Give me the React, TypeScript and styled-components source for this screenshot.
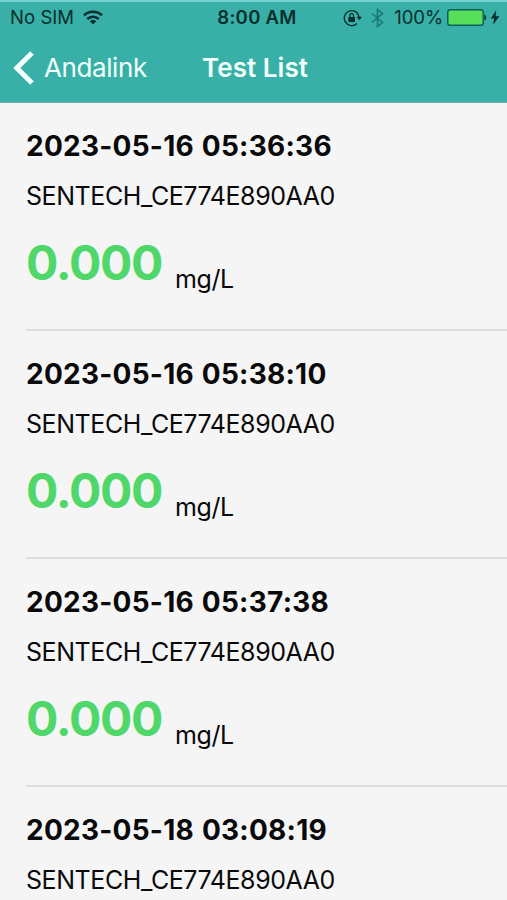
import React from "react";
import styled, { createGlobalStyle } from "styled-components";

const GlobalStyle = createGlobalStyle`
  * { box-sizing: border-box; }
  html, body { margin: 0; background: #f5f5f6; overflow: hidden; }
  body { font-family: Inter, "Liberation Sans", sans-serif; color: #0a0a0a; }
`;

const Screen = styled.main`
  width: 507px;
  height: 900px;
  overflow: hidden;
  background: #f5f5f6;
`;

const Header = styled.header`
  height: 103px;
  background: #38b0a7;
  border-top: 2px solid #74d3cd;
  border-bottom: 1px solid #6faca8;
`;

const StatusBar = styled.div`
  display: grid;
  grid-template-columns: 1fr auto 1fr;
  align-items: center;
  height: 31px;
  padding: 0 7px 0 10px;
  color: #072e2d;
  font-size: 18.5px;
  line-height: 23px;
`;

const StatusGroup = styled.div<{ $end?: boolean }>`
  display: flex;
  align-items: center;
  justify-content: ${(p) => (p.$end ? "flex-end" : "flex-start")};
  white-space: nowrap;
  svg { display: block; flex: none; }
`;

const Carrier = styled.span`
  margin-right: 9px;
  letter-spacing: 0.05px;
`;

const Clock = styled.span`
  padding-left: 4px;
  font-weight: 600;
  letter-spacing: 0.3px;
`;

const Percent = styled.span`
  margin: 0 4px 0 10px;
  letter-spacing: -0.1px;
`;

const NavBar = styled.nav`
  display: grid;
  grid-template-columns: 1fr auto 1fr;
  align-items: center;
  height: 69px;
  padding: 0 13px;
  color: #f2fffd;
`;

const BackButton = styled.button`
  display: flex;
  align-items: center;
  gap: 10px;
  padding: 0;
  border: 0;
  background: none;
  color: inherit;
  font: 400 26px/32px Inter, "Liberation Sans", sans-serif;
  letter-spacing: -0.4px;
  svg { display: block; flex: none; }
`;

const Title = styled.h1`
  margin: 0 0 0 3px;
  font-size: 26px;
  line-height: 32px;
  font-weight: 600;
  letter-spacing: 0.05px;
`;

const List = styled.ul`
  margin: 0;
  padding: 0 0 0 26px;
  list-style: none;
`;

const Row = styled.li`
  height: 228px;
  padding-top: 26px;
  border-bottom: 2px solid #dfdfe1;
`;

const Timestamp = styled.h2`
  margin: 0 0 18px;
  font-size: 28px;
  line-height: 34px;
  font-weight: 700;
  letter-spacing: 0.25px;
  word-spacing: 1px;
`;

const Device = styled.p`
  margin: 0 0 24px;
  font-size: 25px;
  line-height: 30px;
  letter-spacing: -0.43px;
`;

const Reading = styled.div`
  display: flex;
  align-items: flex-end;
`;

const Value = styled.span`
  width: 149px;
  color: #50d76a;
  font-size: 48px;
  line-height: 56px;
  font-weight: 650;
  letter-spacing: -1.3px;
`;

const Unit = styled.span`
  margin-bottom: -3px;
  font-size: 25px;
  line-height: 30px;
  letter-spacing: -0.4px;
`;

const WifiIcon = () => (
  <svg width="20" height="15" viewBox="0 0 20 15" fill="none" stroke="currentColor" strokeWidth="2.5">
    <path d="M1 5.4a13 13 0 0 1 18 0" />
    <path d="M4.3 9a8.2 8.2 0 0 1 11.4 0" />
    <path d="M10 14.4 6.7 11.2a4.8 4.8 0 0 1 6.6 0Z" fill="currentColor" stroke="none" />
  </svg>
);

const RotationLockIcon = () => (
  <svg width="20" height="18" viewBox="0 0 20 18" fill="none" stroke="currentColor">
    <path d="M14 14.600A7.500 7.500 0 1 1 16.200 8" strokeWidth="1.400" />
    <path d="M13.500 7.700h5.600l-2.800 3.600Z" fill="currentColor" stroke="none" />
    <rect x="5.400" y="8" width="6.600" height="5" rx="0.600" fill="currentColor" stroke="none" />
    <path d="M6.900 8V6.500a1.800 1.800 0 0 1 3.600 0V8" strokeWidth="1.200" />
  </svg>
);

const BluetoothIcon = () => (
  <svg width="13" height="20" viewBox="0 0 13 20" fill="none" stroke="#1b7772" strokeWidth="1.6">
    <path d="M1 5.500 11.500 14.500 6.500 18.500V1.500l5 4L1 14.500" />
  </svg>
);

const BatteryIcon = () => (
  <svg width="40" height="17" viewBox="0 0 40 17">
    <rect x="0.75" y="0.75" width="35.5" height="15.5" rx="2.6" fill="#57df5c" stroke="#12605a" strokeWidth="1.5" />
    <path d="M37.3 5.5c2.6.6 2.6 5.400 0 6Z" fill="#0b3c39" />
  </svg>
);

const BoltIcon = () => (
  <svg width="10" height="15" viewBox="0 0 10 15" fill="currentColor">
    <path d="M6.300 0 .8 8.400h3.400L2.900 15 9.400 6.300H5.600Z" />
  </svg>
);

const ChevronIcon = () => (
  <svg width="21" height="34" viewBox="0 0 21 34" fill="none" stroke="currentColor" strokeWidth="5">
    <path d="M19 2 3.800 17 19 32" />
  </svg>
);

const Gap = styled.span<{ $w: number }>`
  flex: none;
  width: ${(p) => p.$w}px;
`;

const timestamps = [
  "2023-05-16 05:36:36",
  "2023-05-16 05:38:10",
  "2023-05-16 05:37:38",
  "2023-05-18 03:08:19",
];

export default function App() {
  return (
    <Screen>
      <GlobalStyle />
      <Header>
        <StatusBar>
          <StatusGroup>
            <Carrier>No SIM</Carrier>
            <WifiIcon />
          </StatusGroup>
          <Clock>8:00 AM</Clock>
          <StatusGroup $end>
            <RotationLockIcon />
            <Gap $w={8} />
            <BluetoothIcon />
            <Percent>100%</Percent>
            <BatteryIcon />
            <Gap $w={3} />
            <BoltIcon />
          </StatusGroup>
        </StatusBar>
        <NavBar>
          <BackButton>
            <ChevronIcon />
            Andalink
          </BackButton>
          <Title>Test List</Title>
        </NavBar>
      </Header>
      <List>
        {timestamps.map((time) => (
          <Row key={time}>
            <Timestamp>{time}</Timestamp>
            <Device>SENTECH_CE774E890AA0</Device>
            <Reading>
              <Value>0.000</Value>
              <Unit>mg/L</Unit>
            </Reading>
          </Row>
        ))}
      </List>
    </Screen>
  );
}
